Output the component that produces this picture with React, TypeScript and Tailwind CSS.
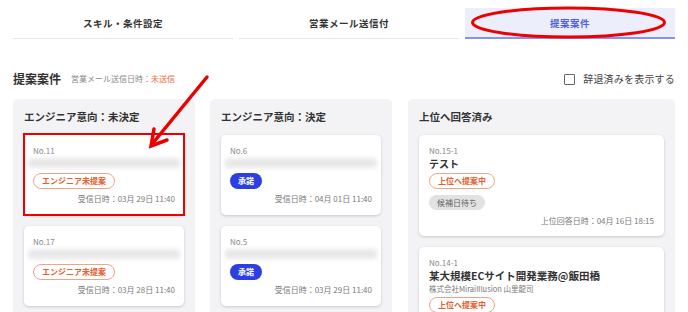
import React from "react";

const Blur = () => (
  <div className="mt-[1px] h-[10px] -mx-[5px] w-[calc(100%+10px)] rounded-[3px] bg-[#e8e8e8] blur-[2px]" />
);

const OrangeBadge = ({ children }: { children: React.ReactNode }) => (
  <span className="inline-flex h-[16px] items-center rounded-full border border-[#f0a487] px-[8px] text-[8px] font-bold leading-none text-[#e5602f]">
    {children}
  </span>
);

const BlueBadge = () => (
  <span className="inline-flex h-[16px] items-center rounded-full bg-[#2b3fe3] px-[8px] text-[8px] font-bold leading-none text-white">
    承諾
  </span>
);

const Card = ({ no, badge, date }: { no: string; badge: React.ReactNode; date: string }) => (
  <div className="rounded-[5px] bg-white px-[9px] pt-[10px] pb-[10px] shadow-[0_1px_3px_rgba(0,0,0,0.18)]">
    <div className="text-[8px] leading-[12px] text-[#8a8a8a]">{no}</div>
    <Blur />
    <div className="mt-[5px] flex">{badge}</div>
    <div className="mt-[4px] text-right text-[8px] leading-[12px] text-[#7a7a7a]">{date}</div>
  </div>
);

export default function App() {
  return (
    <div className="relative h-[312px] w-[688px] overflow-hidden bg-white font-['Noto_Sans_CJK_JP','Noto_Sans',sans-serif] text-[#333]">
      {/* Tabs */}
      <div className="flex px-[13px] pt-[8px]">
        <div className="flex h-[31px] w-[220px] items-center justify-center border-b border-[#e6e6e6] text-[9.5px] font-bold tracking-[0.05em] text-[#333]">
          スキル・条件設定
        </div>
        <div className="ml-[6px] flex h-[31px] w-[220px] items-center justify-center border-b border-[#e6e6e6] text-[9.5px] font-bold tracking-[0.05em] text-[#333]">
          営業メール送信付
        </div>
        <div className="ml-[6px] flex h-[31px] flex-1 items-center justify-center border-b-2 border-[#8891f0] bg-[#eceefb] pt-[1px] text-[9.5px] font-bold tracking-[0.05em] text-[#4f5fe0]">
          提案案件
        </div>
      </div>

      {/* Heading row */}
      <div className="mt-[28px] flex h-[24px] items-center justify-between px-[13px]">
        <div className="flex items-center">
          <span className="text-[12px] font-bold leading-none text-[#333]">提案案件</span>
          <span className="ml-[10px] text-[8px] leading-none text-[#888]">営業メール送信日時：</span>
          <span className="text-[8px] leading-none text-[#ee6a3c]">未送信</span>
        </div>
        <div className="flex items-center">
          <span className="h-[11px] w-[11px] rounded-[1px] border border-[#666]" />
          <span className="ml-[8px] text-[10px] leading-none tracking-[0.02em] text-[#444]">辞退済みを表示する</span>
        </div>
      </div>

      {/* Columns */}
      <div className="mt-[8px] flex px-[13px]">
        <div className="h-[240px] w-[182px] rounded-[5px] bg-[#f3f3f6] px-[11px] pt-[11px]">
          <div className="mb-[11px] text-[10.5px] font-bold leading-[14px] text-[#333]">エンジニア意向：未決定</div>
          <div className="flex flex-col gap-[11px]">
            <Card no="No.11" badge={<OrangeBadge>エンジニア未提案</OrangeBadge>} date="受信日時：03月 29日 11:40" />
            <Card no="No.17" badge={<OrangeBadge>エンジニア未提案</OrangeBadge>} date="受信日時：03月 28日 11:40" />
          </div>
        </div>

        <div className="ml-[15px] h-[240px] w-[182px] rounded-[5px] bg-[#f3f3f6] px-[11px] pt-[11px]">
          <div className="mb-[11px] text-[10.5px] font-bold leading-[14px] text-[#333]">エンジニア意向：決定</div>
          <div className="flex flex-col gap-[11px]">
            <Card no="No.6" badge={<BlueBadge />} date="受信日時：04月 01日 11:40" />
            <Card no="No.5" badge={<BlueBadge />} date="受信日時：03月 29日 11:40" />
          </div>
        </div>

        <div className="ml-[16px] h-[240px] flex-1 rounded-[5px] bg-[#f3f3f6] px-[11px] pt-[11px]">
          <div className="mb-[11px] text-[10.5px] font-bold leading-[14px] text-[#333]">上位へ回答済み</div>
          <div className="flex flex-col gap-[11px]">
            <div className="rounded-[5px] bg-white px-[10px] pt-[10px] pb-[9px] shadow-[0_1px_3px_rgba(0,0,0,0.18)]">
              <div className="text-[8px] leading-[12px] text-[#8a8a8a]">No.15-1</div>
              <div className="text-[10px] font-bold leading-[14px] text-[#333]">テスト</div>
              <div className="mt-[2px] flex">
                <OrangeBadge>上位へ提案中</OrangeBadge>
              </div>
              <div className="mt-[6px] flex">
                <span className="inline-flex h-[15px] items-center rounded-full bg-[#e2e2e2] px-[8px] text-[8px] leading-none text-[#666]">
                  候補日待ち
                </span>
              </div>
              <div className="mt-[5px] text-right text-[8px] leading-[12px] text-[#7a7a7a]">上位回答日時：04月 16日 18:15</div>
            </div>
            <div className="rounded-[5px] bg-white px-[10px] pt-[10px] pb-[9px] shadow-[0_1px_3px_rgba(0,0,0,0.18)]">
              <div className="text-[8px] leading-[12px] text-[#8a8a8a]">No.14-1</div>
              <div className="text-[10.5px] font-bold leading-[14px] text-[#333]">某大規模ECサイト開発業務@飯田橋</div>
              <div className="text-[7.5px] leading-[11px] text-[#777]">株式会社MiraiIllusion 山里龍司</div>
              <div className="mt-[3px] flex">
                <OrangeBadge>上位へ提案中</OrangeBadge>
              </div>
            </div>
          </div>
        </div>
      </div>

      {/* Annotations overlay */}
      <div className="pointer-events-none absolute left-[23px] top-[133px] h-[83px] w-[162px] border-[2.5px] border-[#ee0000]" />
      <svg className="pointer-events-none absolute left-0 top-0" width="688" height="312" viewBox="0 0 688 312">
        <ellipse cx="568.5" cy="22.5" rx="96" ry="14.5" fill="none" stroke="#ee0000" strokeWidth="3" />
        <line x1="207" y1="77" x2="153" y2="143" stroke="#ee0000" strokeWidth="3.5" strokeLinecap="round" />
        <polyline points="154,129 151,146 167,140" fill="none" stroke="#ee0000" strokeWidth="3.5" strokeLinecap="round" strokeLinejoin="miter" />
      </svg>
    </div>
  );
}
